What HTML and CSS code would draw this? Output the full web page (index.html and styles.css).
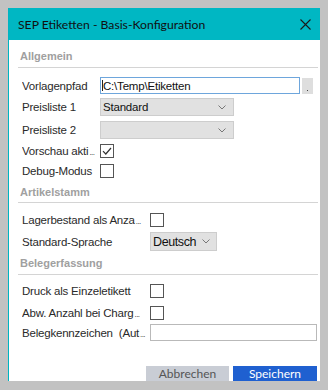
FILE: index.html
```html
<!DOCTYPE html>
<html>
<head>
<meta charset="utf-8">
<link rel="stylesheet" href="styles.css">
</head>
<body>
<div class="dialog">
  <div class="titlebar">
    <span class="title">SEP Etiketten - Basis-Konfiguration</span>
    <svg class="close" width="11" height="11" viewBox="0 0 11 11"><path d="M0.5 0.5 L10.5 10.5 M10.5 0.5 L0.5 10.5" stroke="#1a1a1a" stroke-width="1.1" fill="none"/></svg>
  </div>
  <div class="body">
    <div class="section-head h1">Allgemein</div>
    <div class="row r-path">
      <span class="label l1">Vorlagenpfad</span>
      <div class="textbox focus w-path"><span class="caret"></span>C:\Temp\Etiketten</div>
      <div class="dots"><span class="dot"></span></div>
    </div>
    <div class="row r-sel">
      <span class="label l1">Preisliste 1</span>
      <div class="select w-sel"><span class="val">Standard</span><svg class="chev" width="8" height="5" viewBox="0 0 8 5"><path d="M0.5 0.5 L4 4 L7.5 0.5" stroke="#777" fill="none"/></svg></div>
    </div>
    <div class="row r-sel2">
      <span class="label l1">Preisliste 2</span>
      <div class="select w-sel"><span class="val"></span><svg class="chev" width="8" height="5" viewBox="0 0 8 5"><path d="M0.5 0.5 L4 4 L7.5 0.5" stroke="#777" fill="none"/></svg></div>
    </div>
    <div class="row r-cb mb6">
      <span class="label l1">Vorschau akti<span class="ell">...</span></span>
      <div class="cb"><svg width="12" height="12" viewBox="0 0 12 12"><path d="M2 6.2 L4.8 9 L10 3" stroke="#333" stroke-width="1.2" fill="none"/></svg></div>
    </div>
    <div class="row r-cb">
      <span class="label l1">Debug-Modus</span>
      <div class="cb"></div>
    </div>

    <div class="section-head h2">Artikelstamm</div>
    <div class="row r-cb mt10 mb5">
      <span class="label l2">Lagerbestand als Anza<span class="ell">...</span></span>
      <div class="cb"></div>
    </div>
    <div class="row r-lang">
      <span class="label l2">Standard-Sprache</span>
      <div class="select w-lang"><span class="val big">Deutsch</span><svg class="chev" width="8" height="5" viewBox="0 0 8 5"><path d="M0.5 0.5 L4 4 L7.5 0.5" stroke="#777" fill="none"/></svg></div>
    </div>

    <div class="section-head h3">Belegerfassung</div>
    <div class="row r-cb mt9 mb8">
      <span class="label l2">Druck als Einzeletikett</span>
      <div class="cb"></div>
    </div>
    <div class="row r-cb mb4">
      <span class="label l2">Abw. Anzahl bei Charg<span class="ell">...</span></span>
      <div class="cb"></div>
    </div>
    <div class="row r-beleg">
      <span class="label l2">Belegkennzeichen&nbsp; (Aut<span class="ell">...</span></span>
      <div class="textbox w-beleg"></div>
    </div>

    <div class="buttons">
      <div class="btn cancel">Abbrechen</div>
      <div class="btn save">Speichern</div>
    </div>
  </div>
</div>
</body>
</html>
```
FILE: styles.css
```css
html, body {
  margin: 0;
  padding: 0;
  background: #c2c2c2;
}
body {
  padding: 8px 8px 0 8px;
  font-family: "Liberation Sans", Arial, sans-serif;
}
.dialog {
  width: 311px;
  height: 373px;
  background: #ffffff;
  border-left: 1px solid #00b4c2;
  overflow: hidden;
  display: flex;
  flex-direction: column;
}
.titlebar {
  height: 32px;
  flex: none;
  background: #00b7c3;
  display: flex;
  align-items: center;
  padding-left: 9px;
  padding-right: 9px;
}
.title {
  font-family: Lato, "Open Sans", sans-serif;
  font-size: 12.2px;
  color: #111;
  flex: 1;
}
.close {
  display: block;
}
.body {
  display: flex;
  flex-direction: column;
}
.section-head {
  margin-left: 9px;
  margin-right: 2px;
  padding-left: 2px;
  font-size: 11px;
  font-weight: bold;
  line-height: 14px;
  color: #a0a0a0;
  border-bottom: 1px solid #d4d4d4;
}
.h1 { padding-top: 9px; padding-bottom: 4px; }
.h2 { padding-top: 7px; padding-bottom: 3px; }
.h3 { padding-top: 5px; padding-bottom: 4px; }

.row {
  display: flex;
  align-items: center;
  padding-left: 13px;
}
.label {
  font-size: 11.5px;
  color: #2a2a2a;
  letter-spacing: -0.2px;
  white-space: nowrap;
  overflow: hidden;
  flex: none;
}
.ell {
  font-size: 8px;
  letter-spacing: -0.6px;
  margin-left: 1px;
}
.l1 { width: 74px; margin-right: 4px; }
.l2 { width: 124px; margin-right: 4px; }

.r-path { height: 17px; margin-top: 9px; margin-bottom: 4px; }
.r-sel { height: 18px; margin-bottom: 5px; }
.r-sel2 { height: 18px; margin-bottom: 5px; }
.r-cb { height: 14px; }
.r-lang { height: 19px; }
.r-beleg { height: 17px; }
.mb6 { margin-bottom: 6px; }
.mb5 { margin-bottom: 5px; }
.mb8 { margin-bottom: 8px; }
.mb4 { margin-bottom: 4px; }
.mt10 { margin-top: 10px; }
.mt9 { margin-top: 9px; }

.textbox {
  box-sizing: border-box;
  height: 17px;
  border: 1px solid #b9b9b9;
  background: #fff;
  font-size: 11.5px;
  letter-spacing: -0.2px;
  color: #111;
  display: flex;
  align-items: center;
  padding-left: 1px;
}
.textbox.focus { border-color: #6ea6dc; }
.caret {
  width: 1px;
  height: 11px;
  background: #222;
}
.w-path { width: 200px; }
.w-beleg { width: 167px; }
.dots {
  width: 11px;
  height: 16px;
  margin-left: 2px;
  background: #dedede;
  display: flex;
  align-items: flex-end;
  justify-content: center;
  padding-bottom: 3px;
  box-sizing: border-box;
}
.dot {
  width: 1px;
  height: 1px;
  background: #444;
}
.select {
  box-sizing: border-box;
  height: 100%;
  background: #e1e1e1;
  border: 1px solid #cdcdcd;
  display: flex;
  align-items: center;
  padding-left: 2px;
  padding-right: 7px;
}
.w-sel { width: 134px; }
.w-lang { width: 67px; padding-right: 6px; }
.val {
  flex: 1;
  font-size: 11.5px;
  letter-spacing: -0.2px;
  color: #111;
}
.val.big { font-size: 12.5px; letter-spacing: -0.4px; }
.chev { display: block; }
.cb {
  box-sizing: border-box;
  width: 14px;
  height: 14px;
  border: 1px solid #555;
  background: #fff;
  display: flex;
  align-items: center;
  justify-content: center;
}
.cb svg { display: block; }

.buttons {
  display: flex;
  justify-content: flex-end;
  gap: 4px;
  margin-top: 25px;
  padding-right: 3px;
}
.btn {
  height: 15px;
  line-height: 15px;
  text-align: center;
  font-family: Lato, "Open Sans", sans-serif;
  font-size: 12px;
}
.cancel {
  width: 83px;
  background: #c9cdd5;
  color: #555;
}
.save {
  width: 84px;
  background: #1f60d0;
  color: #fff;
}
```
